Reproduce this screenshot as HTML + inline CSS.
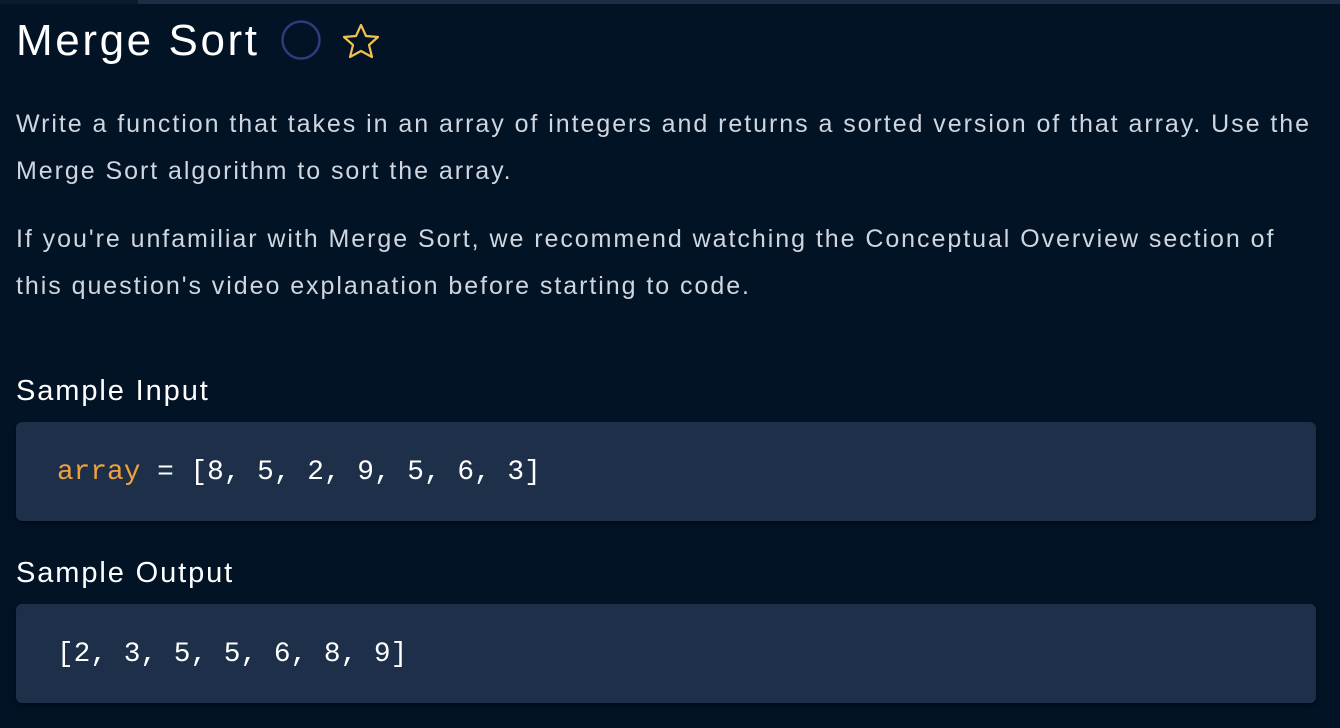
<!DOCTYPE html>
<html><head><style>
body{margin:0;width:1340px;height:728px;background:#021326;overflow:hidden;font-family:"Liberation Sans",sans-serif;color:#d6dbe3;position:relative}
.bar1{position:absolute;left:0;top:0;width:138px;height:4px;background:#0b1a2e}
.bar2{position:absolute;left:138px;top:0;width:1202px;height:4px;background:#1e2d45}
h1{position:absolute;left:16px;top:13px;margin:0;font-size:44px;letter-spacing:2.6px;font-weight:normal;color:#fff;line-height:56px;white-space:nowrap}
.p{position:absolute;left:16px;font-size:25px;letter-spacing:1.95px;line-height:47px;white-space:nowrap;color:#d0d6df}
h2{position:absolute;left:16px;margin:0;font-size:29px;letter-spacing:1.9px;font-weight:normal;color:#fff;white-space:nowrap}
.code{position:absolute;left:16px;width:1300px;height:99px;background:#1e2f4a;border-radius:6px;box-shadow:0 2px 4px rgba(0,0,0,.5)}
.code span.t{position:absolute;left:41px;top:35px;font-family:"Liberation Mono",monospace;font-size:27.8px;color:#fff;white-space:pre}
.o{color:#f0a13c}
</style></head><body>
<div class="bar1"></div><div class="bar2"></div>
<h1>Merge Sort</h1>
<svg style="position:absolute;left:281px;top:20px" width="42" height="40" viewBox="0 0 42 40"><circle cx="20" cy="20" r="18.5" fill="none" stroke="#2f3b7a" stroke-width="2.5"/></svg>
<svg style="position:absolute;left:340px;top:22px" width="42" height="38" viewBox="0 0 42 38"><polygon points="21,3 26,14 38,15 29,23 32,35 21,29 10,35 13,23 4,15 16,14" fill="none" stroke="#f2c14e" stroke-width="2.2" stroke-linejoin="round"/></svg>
<div class="p" style="top:101px">Write a function that takes in an array of integers and returns a sorted version of that array. Use the<br>Merge Sort algorithm to sort the array.</div>
<div class="p" style="top:216px">If you're unfamiliar with Merge Sort, we recommend watching the Conceptual Overview section of<br>this question's video explanation before starting to code.</div>
<h2 style="top:375px">Sample Input</h2>
<div class="code" style="top:422px"><span class="t"><span class="o">array</span> = [8, 5, 2, 9, 5, 6, 3]</span></div>
<h2 style="top:557px">Sample Output</h2>
<div class="code" style="top:604px"><span class="t">[2, 3, 5, 5, 6, 8, 9]</span></div>
</body></html>
